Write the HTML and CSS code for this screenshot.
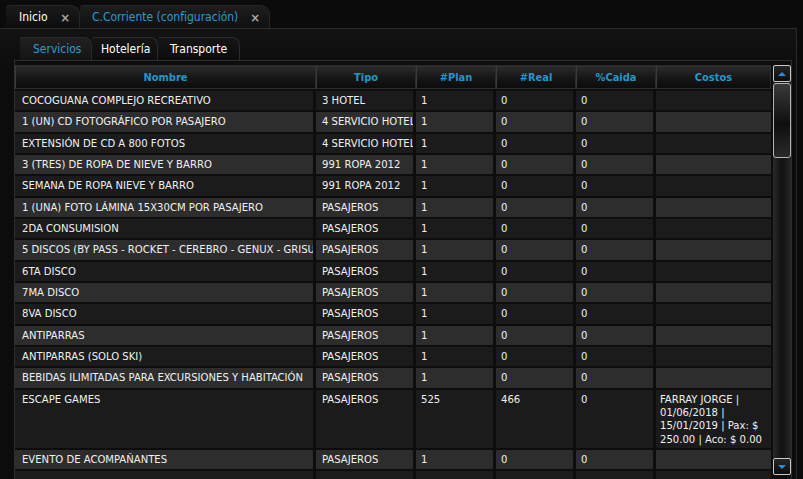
FILE: index.html
```html
<!DOCTYPE html>
<html lang="es">
<head>
<meta charset="utf-8">
<title>C.Corriente (configuración)</title>
<link rel="stylesheet" href="styles.css">
</head>
<body>
<div class="app">
  <div class="tabs-outer">
    <div class="otab otab-home">
      <span class="otab-label">Inicio</span>
      <span class="otab-close">×</span>
    </div>
    <div class="otab otab-active">
      <span class="otab-label">C.Corriente (configuración)</span>
      <span class="otab-close">×</span>
    </div>
  </div>
  <div class="outer-panel">
    <div class="tabs-inner">
      <div class="itab itab-active">Servicios</div>
      <div class="itab">Hotelería</div>
      <div class="itab">Transporte</div>
    </div>
    <div class="inner-panel">
      <div class="grid-wrap">
        <div class="grid">
          <div class="hcell">Nombre</div>
          <div class="hcell">Tipo</div>
          <div class="hcell">#Plan</div>
          <div class="hcell">#Real</div>
          <div class="hcell">%Caida</div>
          <div class="hcell">Costos</div>

          <div class="row odd"><div class="c">COCOGUANA COMPLEJO RECREATIVO</div><div class="c">3 HOTEL</div><div class="c">1</div><div class="c">0</div><div class="c">0</div><div class="c"></div></div>
          <div class="row even"><div class="c">1 (UN) CD FOTOGRÁFICO POR PASAJERO</div><div class="c">4 SERVICIO HOTEL</div><div class="c">1</div><div class="c">0</div><div class="c">0</div><div class="c"></div></div>
          <div class="row odd"><div class="c">EXTENSIÓN DE CD A 800 FOTOS</div><div class="c">4 SERVICIO HOTEL</div><div class="c">1</div><div class="c">0</div><div class="c">0</div><div class="c"></div></div>
          <div class="row even"><div class="c">3 (TRES) DE ROPA DE NIEVE Y BARRO</div><div class="c">991 ROPA 2012</div><div class="c">1</div><div class="c">0</div><div class="c">0</div><div class="c"></div></div>
          <div class="row odd"><div class="c">SEMANA DE ROPA NIEVE Y BARRO</div><div class="c">991 ROPA 2012</div><div class="c">1</div><div class="c">0</div><div class="c">0</div><div class="c"></div></div>
          <div class="row even"><div class="c">1 (UNA) FOTO LÁMINA 15X30CM POR PASAJERO</div><div class="c">PASAJEROS</div><div class="c">1</div><div class="c">0</div><div class="c">0</div><div class="c"></div></div>
          <div class="row odd"><div class="c">2DA CONSUMISION</div><div class="c">PASAJEROS</div><div class="c">1</div><div class="c">0</div><div class="c">0</div><div class="c"></div></div>
          <div class="row even"><div class="c">5 DISCOS (BY PASS - ROCKET - CEREBRO - GENUX - GRISU)</div><div class="c">PASAJEROS</div><div class="c">1</div><div class="c">0</div><div class="c">0</div><div class="c"></div></div>
          <div class="row odd"><div class="c">6TA DISCO</div><div class="c">PASAJEROS</div><div class="c">1</div><div class="c">0</div><div class="c">0</div><div class="c"></div></div>
          <div class="row even"><div class="c">7MA DISCO</div><div class="c">PASAJEROS</div><div class="c">1</div><div class="c">0</div><div class="c">0</div><div class="c"></div></div>
          <div class="row odd"><div class="c">8VA DISCO</div><div class="c">PASAJEROS</div><div class="c">1</div><div class="c">0</div><div class="c">0</div><div class="c"></div></div>
          <div class="row even"><div class="c">ANTIPARRAS</div><div class="c">PASAJEROS</div><div class="c">1</div><div class="c">0</div><div class="c">0</div><div class="c"></div></div>
          <div class="row odd"><div class="c">ANTIPARRAS (SOLO SKI)</div><div class="c">PASAJEROS</div><div class="c">1</div><div class="c">0</div><div class="c">0</div><div class="c"></div></div>
          <div class="row even"><div class="c">BEBIDAS ILIMITADAS PARA EXCURSIONES Y HABITACIÓN</div><div class="c">PASAJEROS</div><div class="c">1</div><div class="c">0</div><div class="c">0</div><div class="c"></div></div>
          <div class="row odd"><div class="c">ESCAPE GAMES</div><div class="c">PASAJEROS</div><div class="c">525</div><div class="c">466</div><div class="c">0</div><div class="c">FARRAY JORGE |<br>01/06/2018 |<br>15/01/2019 | Pax: $<br>250.00 | Aco: $ 0.00</div></div>
          <div class="row even"><div class="c">EVENTO DE ACOMPAÑANTES</div><div class="c">PASAJEROS</div><div class="c">1</div><div class="c">0</div><div class="c">0</div><div class="c"></div></div>
          <div class="row odd"><div class="c"></div><div class="c"></div><div class="c"></div><div class="c"></div><div class="c"></div><div class="c"></div></div>
        </div>
        <div class="scrollbar">
          <div class="sb-btn"><span class="tri-up"></span></div>
          <div class="sb-track">
            <div class="sb-thumb"></div>
          </div>
          <div class="sb-btn"><span class="tri-down"></span></div>
        </div>
      </div>
    </div>
  </div>
</div>
</body>
</html>
```

FILE: styles.css
```css
* { box-sizing: border-box; }
html, body {
  margin: 0;
  height: 100%;
  overflow: hidden;
}
body {
  background: #0b0b0b;
  font-family: "DejaVu Sans Condensed", "DejaVu Sans", "Liberation Sans", sans-serif;
  font-stretch: condensed;
  color: #f0f0f0;
}
.app {
  height: 100%;
  display: flex;
  flex-direction: column;
}
.tabs-outer {
  display: flex;
  padding: 5px 0 0 6px;
  height: 28px;
}
.otab {
  display: flex;
  align-items: center;
  height: 23px;
  padding: 0 9px 0 13px;
  background: linear-gradient(#1a1a1a, #0d0d0d);
  border-top: 1px solid #262626;
  border-right: 1px solid #262626;
  border-radius: 3px 9px 0 0;
  font-size: 12px;
  color: #ffffff;
}
.otab-home { width: 74px; }
.otab-active {
  width: 190px;
  padding-left: 12px;
  color: #2b9bd0;
  background: linear-gradient(#1d1d1d, #101010);
}
.otab-close {
  margin-left: auto;
  color: #a8a8a8;
  font-size: 13px;
  font-weight: bold;
}
.outer-panel {
  flex: 1;
  margin-right: 6px;
  border-top: 1px solid #2a2a2a;
  border-right: 1px solid #2a2a2a;
  background: linear-gradient(#131313, #0c0c0c 40px);
  display: flex;
  flex-direction: column;
  padding: 8px 4px 0 14px;
}
.tabs-inner {
  display: flex;
  padding-left: 6px;
  height: 23px;
}
.itab {
  height: 23px;
  display: flex;
  align-items: center;
  padding: 0 0 0 12px;
  font-size: 12px;
  color: #ffffff;
  background: linear-gradient(#151515, #0c0c0c);
  border-top: 1px solid #2a2a2a;
  border-right: 1px solid #2a2a2a;
  border-radius: 2px 8px 0 0;
}
.itab-active {
  width: 72px;
  padding-left: 13px;
  color: #2b9bd0;
  background: linear-gradient(#202020, #141414);
}
.itab:nth-child(2) { width: 66px; padding-left: 9px; }
.itab:nth-child(3) { width: 82px; }
.inner-panel {
  flex: 1;
  border-top: 1px solid #2e2e2e;
  border-left: 1px solid #2e2e2e;
  border-right: 1px solid #2e2e2e;
  background: #0d0d0d;
  padding: 4px 0 0 0;
  overflow: hidden;
}
.grid-wrap {
  display: flex;
  align-items: flex-start;
}
.grid {
  display: grid;
  grid-template-columns: 301px 100px 80px 80px 80px 115px;
  row-gap: 2px;
  width: 756px;
}
.hcell {
  height: 24px;
  display: flex;
  align-items: center;
  justify-content: center;
  font-size: 11px;
  font-weight: bold;
  color: #2496c8;
  background: linear-gradient(#2c2c2c, #161616 55%, #0c0c0c);
  border: 1px solid #2c2c2c;
  border-left-color: #3a3a3a;
}
.row {
  display: contents;
}
.c {
  min-height: 19.33px;
  padding: 3px 5px 2px 5px;
  margin-right: 3px;
  font-size: 11.2px;
  line-height: 13.33px;
  white-space: nowrap;
  overflow: hidden;
  text-overflow: clip;
}
.c:first-child { padding-left: 7px; }
.c:nth-child(2) { padding-left: 6px; }
.c:last-child { padding-left: 4px; margin-right: 0; }
.odd .c { background: #1b1b1b; }
.even .c { background: #2d2d2d; }
.scrollbar {
  width: 18px;
  margin-left: 2px;
  height: 410px;
  display: flex;
  flex-direction: column;
  background: linear-gradient(90deg, #2a2a2a, #141414 40%, #141414 60%, #262626);
}
.sb-btn {
  height: 17px;
  border: 1px solid #c8c8c8;
  border-radius: 2px;
  background: linear-gradient(#262626, #0c0c0c);
  display: flex;
  align-items: center;
  justify-content: center;
}
.tri-up {
  width: 0; height: 0;
  border-left: 4px solid transparent;
  border-right: 4px solid transparent;
  border-bottom: 4px solid #2c8ad6;
}
.tri-down {
  width: 0; height: 0;
  border-left: 4px solid transparent;
  border-right: 4px solid transparent;
  border-top: 4px solid #2c8ad6;
}
.sb-track {
  flex: 1;
  padding-top: 1px;
}
.sb-thumb {
  height: 75px;
  border: 1px solid #b4b4b4;
  border-radius: 3px;
  background: linear-gradient(#3a3a3a, #161616 45%, #0e0e0e 55%, #2a2a2a);
}
```
